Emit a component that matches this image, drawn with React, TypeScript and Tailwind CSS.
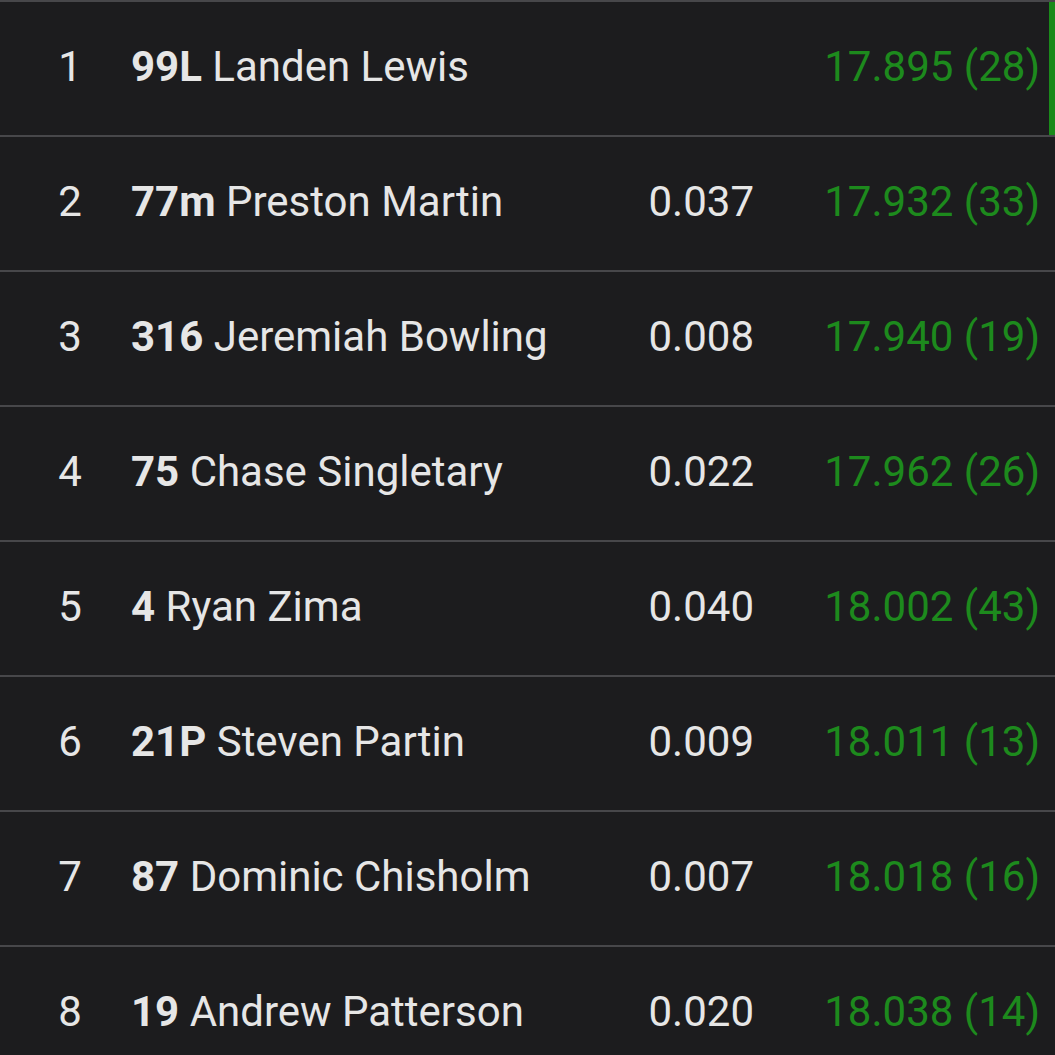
import React from 'react';

interface Lap {
  pos: number;
  car: string;
  name: string;
  gap?: string;
  time: string;
  lap: number;
  leader?: boolean;
}

const laps: Lap[] = [
  { pos: 1, car: '99L', name: 'Landen Lewis', time: '17.895', lap: 28, leader: true },
  { pos: 2, car: '77m', name: 'Preston Martin', gap: '0.037', time: '17.932', lap: 33 },
  { pos: 3, car: '316', name: 'Jeremiah Bowling', gap: '0.008', time: '17.940', lap: 19 },
  { pos: 4, car: '75', name: 'Chase Singletary', gap: '0.022', time: '17.962', lap: 26 },
  { pos: 5, car: '4', name: 'Ryan Zima', gap: '0.040', time: '18.002', lap: 43 },
  { pos: 6, car: '21P', name: 'Steven Partin', gap: '0.009', time: '18.011', lap: 13 },
  { pos: 7, car: '87', name: 'Dominic Chisholm', gap: '0.007', time: '18.018', lap: 16 },
  { pos: 8, car: '19', name: 'Andrew Patterson', gap: '0.020', time: '18.038', lap: 14 },
];

const App = () => {
  return (
    <div
      className="w-[1055px] h-[1055px] overflow-hidden bg-[#1c1c1e] text-[#e6e6e6] text-[42px] leading-none"
      style={{ fontFamily: 'Roboto, "Noto Sans", sans-serif' }}
    >
      {laps.map((l) => (
        <div key={l.pos} className="flex h-[135px] items-stretch border-t-[2px] border-[#47474a]">
          <div className="w-[80px] ml-[30px] pb-[3px] flex items-center justify-center">{l.pos}</div>
          <div className="flex-1 flex items-center pl-[21px] pb-[3px] whitespace-nowrap">
            <span className="font-bold">{l.car}</span>
            <span>&nbsp;{l.name}</span>
          </div>
          <div className="w-[150px] pb-[3px] flex items-center justify-end">{l.gap ?? ''}</div>
          <div className="w-[295px] pb-[3px] flex items-center justify-end pr-[9px] text-[#1d8a1d] whitespace-nowrap">
            {l.time} ({l.lap})
          </div>
          <div className={l.leader ? 'w-[6px] bg-[#1a8a1a]' : 'w-[6px]'} />
        </div>
      ))}
    </div>
  );
};

export default App;
